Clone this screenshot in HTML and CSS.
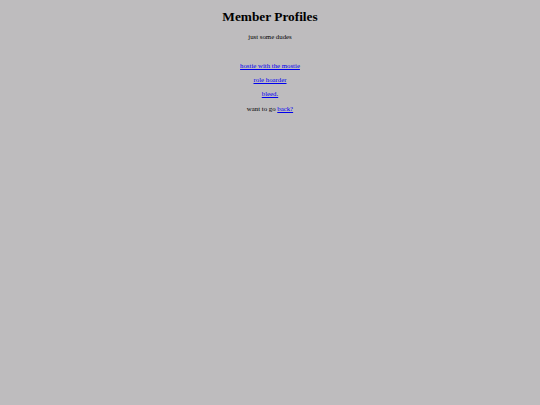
FILE: index.html
```html
<!DOCTYPE html>
<html>
<head>
<meta charset="utf-8">
<link rel="stylesheet" href="styles.css">
</head>
<body>
<div class="page">
<h1 class="title">Member Profiles</h1>
<p>just some dudes</p>
<p>&nbsp;</p>
<p><a href="#">hostie with the mostie</a></p>
<p><a href="#">role hoarder</a></p>
<p><a href="#">bleed.</a></p>
<p>want to go <a href="#">back?</a></p>
</div>
</body>
</html>
```
FILE: styles.css
```css
html, body {
  background: #bebcbe;
}
body {
  margin: 0;
  padding: 0 5.33px;
  font-family: "Liberation Serif", "Times New Roman", serif;
  font-size: 6.8px;
  line-height: 7.67px;
  color: #000;
}
.page {
  text-align: center;
  padding-top: 1px;
}
.title {
  font-size: 13.33px;
  line-height: 15.33px;
  font-weight: bold;
  margin: 7.5px 0 9.2px;
}
p {
  margin: 6.67px 0;
}
a {
  color: #0000ee;
}
```
